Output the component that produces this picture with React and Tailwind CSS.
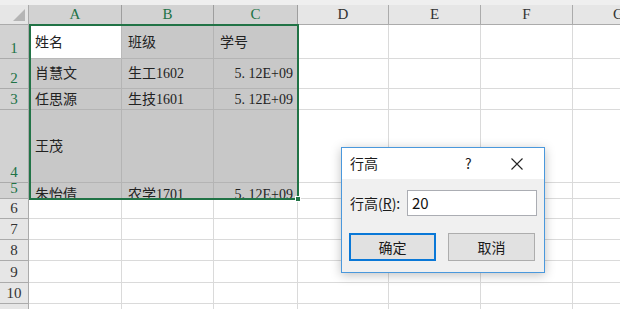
const cols = [
  { key: "A", w: 93, sel: true },
  { key: "B", w: 92, sel: true },
  { key: "C", w: 84, sel: true },
  { key: "D", w: 91 },
  { key: "E", w: 92 },
  { key: "F", w: 92 },
  { key: "G", w: 92 },
];

const rows = [
  { n: 1, h: 34, pt: 10, cells: ["姓名", "班级", "学号"] },
  { n: 2, h: 30, pt: 7, cells: ["肖慧文", "生工1602", "5. 12E+09"] },
  { n: 3, h: 21, pt: 3, cells: ["任思源", "生技1601", "5. 12E+09"] },
  { n: 4, h: 73, pt: 29, cells: ["王茂", "", ""] },
  { n: 5, h: 16, pt: 4, cells: ["朱怡倩", "农学1701", "5. 12E+09"] },
  { n: 6, h: 20 },
  { n: 7, h: 21 },
  { n: 8, h: 21 },
  { n: 9, h: 22 },
  { n: 10, h: 21 },
  { n: "", h: 21 },
];

const serif = { fontFamily: '"Liberation Serif", "Noto Sans CJK SC", serif' };

const Dialog = () => {
  return (
    <div
      className="absolute left-[341px] top-[147px] w-[204px] h-[126px] border border-[#4a98dc] bg-[#f0f0f0] shadow-[0_2px_10px_rgba(0,0,0,0.25)] flex flex-col"
      style={{ fontFamily: '"Noto Sans CJK SC", sans-serif' }}
    >
      <div className="h-[31px] bg-white flex items-center pl-[8px] text-[14px] text-[#1a1a1a]">
        <div className="flex-1">行高</div>
        <div className="w-[10px] text-[14px] mr-[36px]">?</div>
        <svg width="12" height="12" viewBox="0 0 12 12" className="mr-[21px]">
          <path d="M0.5 0.5 L11.5 11.5 M11.5 0.5 L0.5 11.5" stroke="#222" strokeWidth="1.1" />
        </svg>
      </div>
      <div className="flex items-center pl-[8px] pt-[11px]">
        <div className="text-[14px] text-[#1a1a1a] w-[57px]">
          行高(<span className="underline">R</span>):
        </div>
        <div className="w-[130px] h-[26px] border border-[#abadb3] bg-white flex items-center pl-[4px] text-[15px] text-[#111]">
          20
        </div>
      </div>
      <div className="flex pl-[7px] pt-[17px] gap-[12px]">
        <div className="w-[87px] h-[28px] border-2 border-[#0a78d7] bg-[#e1e1e1] flex items-center justify-center text-[14px] text-[#1a1a1a]">
          确定
        </div>
        <div className="w-[87px] h-[28px] border border-[#adadad] bg-[#e1e1e1] flex items-center justify-center text-[14px] text-[#1a1a1a]">
          取消
        </div>
      </div>
    </div>
  );
};

export default function App() {
  return (
    <div className="relative w-[620px] h-[309px] overflow-hidden bg-white">
      <div className="h-[5px] bg-[#efefef]" />
      <div className="flex h-[20px]">
        <div className="w-[29px] shrink-0 bg-[#e6e6e6] border-r border-b border-[#ababab] relative">
          <svg width="12" height="12" viewBox="0 0 12 12" className="absolute right-[3px] bottom-[3px]">
            <path d="M12 0 L12 12 L0 12 Z" fill="#b5b5b5" />
          </svg>
        </div>
        {cols.map((c) => (
          <div
            key={c.key}
            className={
              c.sel
                ? "shrink-0 bg-[#d2d2d2] border-r border-b border-[#9e9e9e] flex items-center justify-center text-[15px] text-[#217346]"
                : "shrink-0 bg-[#e6e6e6] border-r border-b border-[#ababab] flex items-center justify-center text-[15px] text-[#333]"
            }
            style={{ width: c.w, ...serif }}
          >
            {c.key}
          </div>
        ))}
      </div>
      {rows.map((r, ri) => {
        const sel = !!r.cells;
        return (
          <div key={ri} className="flex" style={{ height: r.h }}>
            <div
              className={
                sel
                  ? "w-[29px] shrink-0 bg-[#d2d2d2] border-r border-b border-[#ababab] flex items-end justify-center pb-[1px] text-[15px] leading-[17px] text-[#217346] overflow-hidden"
                  : "w-[29px] shrink-0 bg-[#e6e6e6] border-r border-b border-[#ababab] flex items-end justify-center pb-[1px] text-[15px] leading-[17px] text-[#333] overflow-hidden"
              }
              style={serif}
            >
              {r.n}
            </div>
            {cols.map((c, i) => {
              const inSel = sel && c.sel;
              const active = r.n === 1 && i === 0;
              const text = inSel ? r.cells[i] : "";
              return (
                <div
                  key={c.key}
                  className={
                    active
                      ? "shrink-0 bg-white border-r border-b border-[#b9b9b9] overflow-hidden px-[6px] text-[14px] leading-[16px] text-[#222]"
                      : inSel
                      ? "shrink-0 bg-[#c8c8c8] border-r border-b border-[#b4b4b4] overflow-hidden px-[6px] text-[14px] leading-[16px] text-[#222]"
                      : "shrink-0 bg-white border-r border-b border-[#dadada] overflow-hidden"
                  }
                  style={{
                    width: c.w,
                    paddingTop: inSel ? r.pt : 0,
                    textAlign: i === 2 && r.n !== 1 ? "right" : "left",
                    paddingRight: i === 2 ? 4 : undefined,
                    ...serif,
                  }}
                >
                  {text}
                </div>
              );
            })}
          </div>
        );
      })}
      <div className="absolute left-[29px] top-[24px] w-[270px] h-[176px] border-2 border-[#217346] pointer-events-none" />
      <div className="absolute left-[295px] top-[196px] w-[6px] h-[6px] bg-[#217346] border border-white" />
      <Dialog />
    </div>
  );
}
